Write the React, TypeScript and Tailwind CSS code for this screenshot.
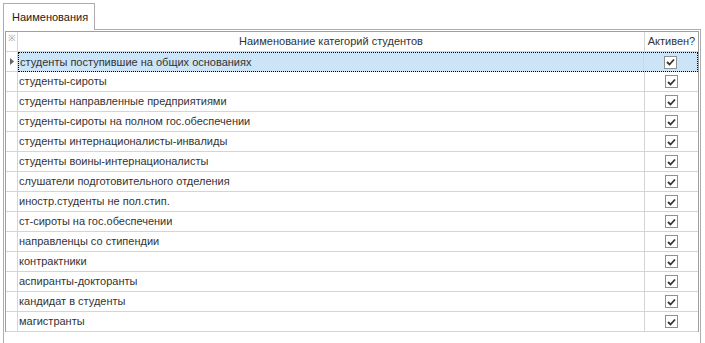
const rows = [
  'студенты поступившие на общих основаниях',
  'студенты-сироты',
  'студенты направленные предприятиями',
  'студенты-сироты на полном гос.обеспечении',
  'студенты интернационалисты-инвалиды',
  'студенты воины-интернационалисты',
  'слушатели подготовительного отделения',
  'иностр.студенты не пол.стип.',
  'ст-сироты на гос.обеспечении',
  'направленцы со стипендии',
  'контрактники',
  'аспиранты-докторанты',
  'кандидат в студенты',
  'магистранты',
];

function CheckBox() {
  return (
    <div className="w-[13px] h-[13px] border border-[#8e8f8f] bg-white flex items-center justify-center">
      <svg width="9" height="8" viewBox="0 0 9 8">
        <path d="M1 4 L3.5 6.5 L8 1.5" fill="none" stroke="#333" strokeWidth="1.8" />
      </svg>
    </div>
  );
}

export default function App() {
  return (
    <div
      className="w-[705px] h-[343px] bg-white text-[11px] text-[#333] overflow-hidden"
      style={{ fontFamily: '"Liberation Sans", Arial, sans-serif' }}
    >
      <div className="flex h-[30px] pt-[3px] pl-[3px]">
        <div className="w-[92px] h-[27px] border border-b-0 border-[#adadad] bg-white flex items-center pl-[8px] text-[#1b1b1b]">
          Наименования
        </div>
        <div className="flex-1 border-b border-[#adadad] mr-[4px]" />
      </div>
      <div className="ml-[3px] mr-[4px] h-[313px] border-l border-r border-[#adadad] pt-[1px] pl-[1px] pr-[1px]">
        <div className="border-l border-t border-r border-[#a0a0a0]">
          <div className="flex h-[20px] border-b border-[#d5d5d5]">
            <div className="w-[12px] border-r border-[#d5d5d5] flex items-start justify-center text-[9px] text-[#999] leading-[12px]">
              ※
            </div>
            <div className="flex-1 border-r border-[#d5d5d5] flex items-center justify-center">
              Наименование категорий студентов
            </div>
            <div className="w-[53px] flex items-center justify-center">Активен?</div>
          </div>
          {rows.map((r, i) => (
            <div key={r} className="flex h-[20px] border-b border-[#d5d5d5]">
              <div className="w-[12px] border-r border-[#d5d5d5] flex items-center justify-center">
                {i === 0 && (
                  <svg width="4" height="7" viewBox="0 0 4 7">
                    <path d="M0 0 L4 3.5 L0 7 Z" fill="#666" />
                  </svg>
                )}
              </div>
              <div
                className={
                  i === 0
                    ? 'flex-1 flex bg-[#cce4f7] border border-dotted border-black -mb-px'
                    : 'flex-1 flex'
                }
              >
                <div className="flex-1 border-r border-[#d5d5d5] flex items-center pl-[1px]">
                  {r}
                </div>
                <div className="w-[53px] flex items-center justify-center">
                  <CheckBox />
                </div>
              </div>
            </div>
          ))}
        </div>
      </div>
    </div>
  );
}
